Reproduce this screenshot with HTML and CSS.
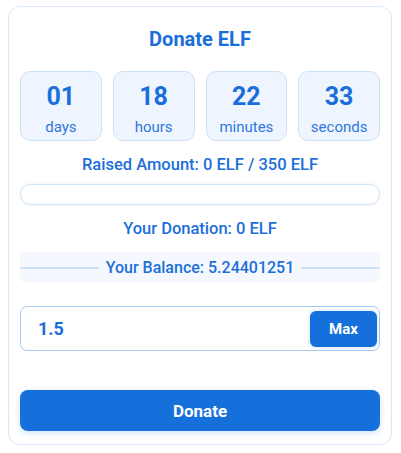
FILE: index.html
```html
<!DOCTYPE html>
<html lang="en">
<head>
<meta charset="utf-8">
<title>Donate ELF</title>
<link rel="stylesheet" href="styles.css">
</head>
<body>
<div class="card">
  <h1 class="title">Donate ELF</h1>
  <div class="countdown">
    <div class="unit"><span class="num">01</span><span class="label">days</span></div>
    <div class="unit"><span class="num">18</span><span class="label">hours</span></div>
    <div class="unit"><span class="num">22</span><span class="label">minutes</span></div>
    <div class="unit"><span class="num">33</span><span class="label">seconds</span></div>
  </div>
  <p class="info raised">Raised Amount: 0 ELF / 350 ELF</p>
  <div class="progress"><div class="progress-fill" style="width:0%"></div></div>
  <p class="info donation">Your Donation: 0 ELF</p>
  <div class="balance">
    <span class="line"></span>
    <span class="balance-text">Your Balance: 5.24401251</span>
    <span class="line"></span>
  </div>
  <div class="amount">
    <input class="amount-input" type="text" value="1.5">
    <button class="max-btn" type="button">Max</button>
  </div>
  <button class="donate-btn" type="button">Donate</button>
</div>
</body>
</html>
```
FILE: styles.css
```css
html, body {
  background: #ffffff;
}
body {
  margin: 6px 8px;
  font-family: Roboto, "Liberation Sans", Arial, sans-serif;
  color: #1b6fd9;
}
.card {
  width: 384px;
  height: 439px;
  box-sizing: border-box;
  border: 1px solid #d9e7f7;
  border-radius: 12px;
  padding: 12px 11px 13px;
  display: flex;
  flex-direction: column;
}
.title {
  margin: 0;
  font-size: 20px;
  line-height: 40px;
  font-weight: 700;
  text-align: center;
  color: #1a6edb;
}
.countdown {
  margin-top: 12px;
  display: grid;
  grid-template-columns: repeat(4, 1fr);
  gap: 11px;
}
.unit {
  height: 70px;
  box-sizing: border-box;
  background: #eef5fe;
  border: 1px solid #cfe1f6;
  border-radius: 10px;
  display: flex;
  flex-direction: column;
  align-items: center;
  padding-top: 10px;
}
.num {
  font-size: 25px;
  line-height: 30px;
  font-weight: 700;
  color: #1a6edb;
}
.label {
  margin-top: 5px;
  font-size: 15px;
  line-height: 20px;
  color: #2f77dc;
}
.info {
  margin: 12px 0 0;
  font-size: 16.5px;
  line-height: 24px;
  font-weight: 500;
  text-align: center;
  color: #1c6fd9;
}
.progress {
  margin-top: 7px;
  height: 21px;
  box-sizing: border-box;
  border: 1.5px solid #d3e4f8;
  border-radius: 11px;
  background: #ffffff;
  box-shadow: 0 0 3px rgba(26, 110, 219, 0.12);
  overflow: hidden;
}
.progress-fill {
  height: 100%;
  background: #1a6edb;
}
.donation {
  margin-top: 12px;
}
.balance {
  margin-top: 11px;
  height: 31px;
  background: #f5f9ff;
  border-radius: 6px;
  display: flex;
  align-items: center;
  gap: 7px;
}
.line {
  flex: 1;
  height: 2px;
  background: #cfe1f6;
}
.balance-text {
  font-size: 16px;
  font-weight: 500;
  color: #1c6fd9;
}
.amount {
  margin-top: 23px;
  height: 45px;
  box-sizing: border-box;
  border: 1px solid #a9c9f1;
  border-radius: 7px;
  display: flex;
  align-items: center;
  padding: 0 2px 0 17px;
}
.amount-input {
  flex: 1;
  min-width: 0;
  border: none;
  outline: none;
  padding: 0;
  background: transparent;
  font-family: inherit;
  font-size: 18px;
  font-weight: 700;
  color: #1a6edb;
}
.max-btn {
  width: 67px;
  height: 36px;
  border: none;
  border-radius: 6px;
  background: #1570dc;
  color: #ffffff;
  font-family: inherit;
  font-size: 15px;
  font-weight: 700;
  box-shadow: 0 0 4px rgba(21, 112, 220, 0.25);
}
.donate-btn {
  margin-top: 39px;
  height: 41px;
  border: none;
  border-radius: 8px;
  background: #1570dc;
  color: #ffffff;
  font-family: inherit;
  font-size: 17px;
  font-weight: 700;
  box-shadow: 0 2px 6px rgba(21, 112, 220, 0.2);
}
```
